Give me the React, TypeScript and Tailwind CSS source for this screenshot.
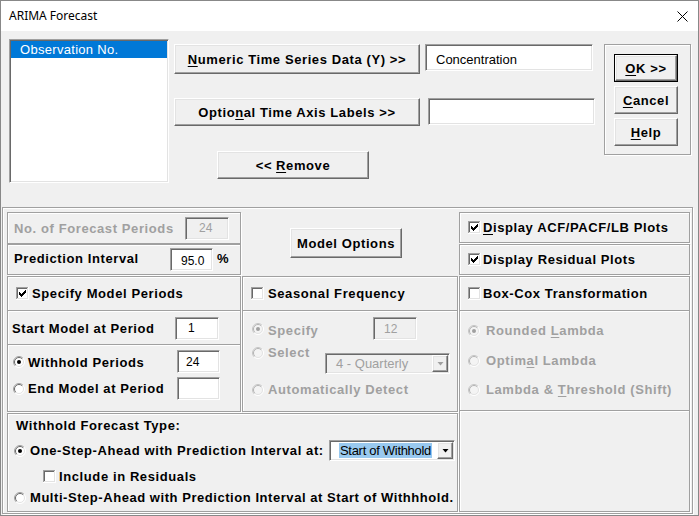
import React from "react";

const etched = "border border-[#a0a0a0] shadow-[inset_1px_1px_0_#fff,1px_1px_0_#fff]";
const sunken =
  "border border-t-[#a0a0a0] border-l-[#a0a0a0] border-r-white border-b-white shadow-[inset_1px_1px_0_#696969,inset_-1px_-1px_0_#e3e3e3]";
const raised =
  "border border-t-white border-l-white border-r-[#696969] border-b-[#696969] shadow-[inset_-1px_-1px_0_#a0a0a0,inset_1px_1px_0_#e3e3e3] bg-[#f0f0f0]";
const lbl = "font-bold text-[13px] whitespace-nowrap leading-[15px] tracking-[0.6px]";

function U({ children }: { children: React.ReactNode }) {
  return <span className="underline underline-offset-[2px] decoration-1">{children}</span>;
}

function Divider() {
  return <div className="h-[2px] shrink-0 border-t border-t-[#a0a0a0] border-b border-b-white" />;
}

function Check({ checked = false }: { checked?: boolean }) {
  const ys = [5, 6, 7, 6, 5, 4, 3];
  return (
    <svg width="13" height="13" viewBox="0 0 13 13" className="shrink-0 block">
      <rect x="0" y="0" width="13" height="13" fill="#fff" />
      <rect x="0" y="0" width="12" height="1" fill="#a0a0a0" />
      <rect x="0" y="0" width="1" height="12" fill="#a0a0a0" />
      <rect x="1" y="1" width="10" height="1" fill="#696969" />
      <rect x="1" y="1" width="1" height="10" fill="#696969" />
      <rect x="11" y="1" width="1" height="11" fill="#e3e3e3" />
      <rect x="1" y="11" width="11" height="1" fill="#e3e3e3" />
      <rect x="2" y="2" width="9" height="9" fill="#fff" />
      {checked &&
        ys.map((y, i) => <rect key={i} x={3 + i} y={y} width="1" height="3" fill="#000" />)}
    </svg>
  );
}

function Radio({ checked = false, disabled = false }: { checked?: boolean; disabled?: boolean }) {
  return (
    <svg width="12" height="12" viewBox="0 0 12 12" className="shrink-0 block">
      <circle cx="6" cy="6" r="5.5" fill={disabled ? "#f4f4f4" : "#fff"} stroke="#fff" />
      <path d="M2.1 9.9A5.5 5.5 0 0 1 9.9 2.1" fill="none" stroke={disabled ? "#c4c4c4" : "#a0a0a0"} />
      <path d="M2.8 9.2A4.5 4.5 0 0 1 9.2 2.8" fill="none" stroke={disabled ? "#b4b4b4" : "#696969"} />
      <path d="M2.8 9.2A4.5 4.5 0 0 0 9.2 2.8" fill="none" stroke="#e3e3e3" />
      {checked && <circle cx="6" cy="6" r="2" fill={disabled ? "#a0a0a0" : "#000"} />}
    </svg>
  );
}

function Btn({ className = "", children }: { className?: string; children: React.ReactNode }) {
  return (
    <div className={`flex items-center justify-center ${raised} ${lbl} ${className}`}>{children}</div>
  );
}

function Input({
  className = "",
  value = "",
  disabled = false,
  pad = "pl-[10px]",
}: {
  className?: string;
  value?: string;
  disabled?: boolean;
  pad?: string;
}) {
  return (
    <div
      className={`${sunken} ${disabled ? "bg-[#f0f0f0] text-[#a0a0a0]" : "bg-white text-black"} flex items-center text-[12px] shrink-0 ${pad} ${className}`}
    >
      {value}
    </div>
  );
}

function Arrow({ disabled = false }: { disabled?: boolean }) {
  return (
    <div className={`w-[16px] h-full flex items-center justify-center ${raised}`}>
      <svg width="7" height="4" viewBox="0 0 7 4" className="block">
        <path d="M0.5 0H6.5L3.5 3.5Z" fill={disabled ? "#a0a0a0" : "#000"} />
      </svg>
    </div>
  );
}

export default function App() {
  return (
    <div className="w-[699px] h-[516px] overflow-hidden border border-[#888] bg-[#f0f0f0] flex flex-col font-['Liberation_Sans',Arial,sans-serif] text-black">
      {/* title bar */}
      <div className="h-[30px] shrink-0 bg-white flex items-center justify-between pl-[8px] pr-[10px]">
        <span className="font-['Noto_Sans',sans-serif] text-[12px]">ARIMA Forecast</span>
        <svg width="11" height="11" viewBox="0 0 11 11" className="block">
          <path d="M0.5 0.5L10.5 10.5M10.5 0.5L0.5 10.5" stroke="#000" strokeWidth="1" />
        </svg>
      </div>

      {/* top section */}
      <div className="h-[176px] shrink-0 flex items-start">
        <div className={`ml-[8px] mt-[8px] w-[160px] h-[144px] bg-white ${sunken} pt-[1px] pl-[1px] pr-[1px]`}>
          <div className="h-[17px] bg-[#0078d7] text-white text-[13px] tracking-[0.3px] pl-[9px] flex items-center">
            Observation No.
          </div>
        </div>

        <div className="ml-[5px] w-[422px] flex flex-col">
          <div className="mt-[13px] flex items-start">
            <Btn className="w-[246px] h-[30px]">
              <U>N</U>umeric Time Series Data (Y) &gt;&gt;
            </Btn>
            <Input className="ml-[5px] w-[168px] h-[27px] items-start pt-[5px] text-[13px]" value="Concentration" pad="pl-[10px]" />
          </div>
          <div className="mt-[24px] flex items-start">
            <Btn className="w-[246px] h-[28px]">
              Optio<U>n</U>al Time Axis Labels &gt;&gt;
            </Btn>
            <Input className="ml-[8px] w-[167px] h-[27px]" />
          </div>
          <div className="mt-[25px] ml-[43px]">
            <Btn className="w-[152px] h-[28px]">
              &lt;&lt; <span className="ml-[4px]"><U>R</U>emove</span>
            </Btn>
          </div>
        </div>

        <div className={`ml-[8px] mt-[13px] w-[87px] h-[111px] ${etched} pl-[9px] pt-[9px] flex flex-col`}>
          <div className="w-[64px] h-[28px] border border-black">
            <Btn className="w-full h-full">
              <U>O</U>K &gt;&gt;
            </Btn>
          </div>
          <Btn className="mt-[4px] w-[64px] h-[28px]">
            <U>C</U>ancel
          </Btn>
          <Btn className="mt-[4px] w-[64px] h-[28px]">
            <U>H</U>elp
          </Btn>
        </div>
      </div>

      {/* bottom frame */}
      <div className={`ml-[1px] w-[691px] h-[307px] shrink-0 ${etched} pl-[4px] pt-[4px] flex gap-[1px]`}>
        {/* left + mid */}
        <div className="w-[451px] flex flex-col gap-[1px]">
          <div className="h-[200px] flex gap-[1px]">
            {/* left col */}
            <div className="w-[234px] flex flex-col">
              <div className={`h-[32px] ${etched} flex items-center pl-[6px]`}>
                <div className={`w-[171px] ${lbl} text-[#a0a0a0]`}>No. of Forecast Periods</div>
                <Input className="w-[44px] h-[23px]" value="24" disabled pad="pl-[13px]" />
              </div>
              <div className={`h-[31px] ${etched} flex items-center pl-[6px]`}>
                <div className={`w-[156px] ${lbl} -mt-[2px]`}>Prediction Interval</div>
                <Input className="w-[43px] h-[23px] pt-[3px]" value="95.0" pad="pl-[10px]" />
                <span className={`ml-[4px] ${lbl} -mt-[3px]`}>%</span>
              </div>
              <div className={`mt-[1px] h-[136px] ${etched} flex flex-col`}>
                <div className="h-[33px] shrink-0 flex items-center pl-[8px]">
                  <Check checked />
                  <span className={`ml-[3px] ${lbl}`}>Specify Model Periods</span>
                </div>
                <Divider />
                <div className="h-[32px] shrink-0 flex items-center pl-[4px]">
                  <div className={`w-[163px] ${lbl}`}>Start Model at Period</div>
                  <Input className="w-[44px] h-[23px]" value="1" pad="pl-[12px]" />
                </div>
                <Divider />
                <div className="pt-[4px] pl-[5px] flex flex-col">
                  <div className="h-[23px] flex items-center">
                    <Radio checked />
                    <div className={`ml-[3px] w-[149px] ${lbl} mt-[2px]`}>Withhold Periods</div>
                    <Input className="w-[43px] h-[23px] items-start pt-[2px]" value="24" pad="pl-[8px]" />
                  </div>
                  <div className="mt-[4px] h-[23px] flex items-center">
                    <Radio />
                    <div className={`ml-[3px] w-[149px] ${lbl}`}>End Model at Period</div>
                    <Input className="w-[43px] h-[23px]" />
                  </div>
                </div>
              </div>
            </div>

            {/* mid col */}
            <div className="w-[216px] flex flex-col">
              <div className="h-[64px] pl-[48px] pt-[16px]">
                <Btn className="w-[112px] h-[30px]">Model Options</Btn>
              </div>
              <div className={`h-[136px] ${etched} flex flex-col`}>
                <div className="h-[33px] shrink-0 flex items-center pl-[8px]">
                  <Check />
                  <span className={`ml-[4px] ${lbl}`}>Seasonal Frequency</span>
                </div>
                <Divider />
                <div className="pt-[5px] pl-[9px] flex flex-col text-[#a0a0a0]">
                  <div className="h-[23px] flex items-center">
                    <Radio checked disabled />
                    <div className={`ml-[4px] w-[105px] ${lbl} mt-[3px]`}>Specify</div>
                    <Input className="w-[44px] h-[23px]" value="12" disabled pad="pl-[10px]" />
                  </div>
                  <div className="mt-[5px] h-[28px] flex items-start">
                    <div className="h-[15px] flex items-center">
                      <Radio disabled />
                      <div className={`ml-[4px] w-[57px] ${lbl}`}>Select</div>
                    </div>
                    <div className={`mt-[8px] w-[125px] h-[21px] ${sunken} bg-[#f0f0f0] flex items-center justify-between pl-[10px] pr-[1px] py-[1px]`}>
                      <span className="text-[13px] text-[#a0a0a0]">4 - Quarterly</span>
                      <Arrow disabled />
                    </div>
                  </div>
                  <div className="mt-[9px] h-[15px] flex items-center">
                    <Radio disabled />
                    <div className={`ml-[4px] ${lbl}`}>Automatically Detect</div>
                  </div>
                </div>
              </div>
            </div>
          </div>

          {/* withhold forecast type */}
          <div className={`h-[99px] ${etched} flex flex-col pl-[6px] pt-[4px]`}>
            <div className={`h-[15px] pl-[2px] flex items-center ${lbl}`}>Withhold Forecast Type:</div>
            <div className="mt-[7px] h-[21px] flex items-center">
              <Radio checked />
              <div className={`ml-[4px] w-[299px] ${lbl}`}>One-Step-Ahead with Prediction Interval at:</div>
              <div className={`w-[126px] h-[21px] ${sunken} bg-white flex items-center justify-between pl-[9px] pr-[1px] py-[1px]`}>
                <span className="text-[13px] bg-[#99c9ef] px-[1px] leading-[15px] tracking-[-0.3px]">Start of Withhold</span>
                <Arrow />
              </div>
            </div>
            <div className="mt-[8px] h-[15px] flex items-center pl-[29px]">
              <Check />
              <span className={`ml-[3px] ${lbl}`}>Include in Residuals</span>
            </div>
            <div className="mt-[6px] h-[15px] flex items-center">
              <Radio />
              <div className={`ml-[4px] ${lbl} tracking-[0.55px]`}>Multi-Step-Ahead with Prediction Interval at Start of Withhhold.</div>
            </div>
          </div>
        </div>

        {/* right col */}
        <div className="w-[231px] flex flex-col">
          <div className={`h-[31px] ${etched} flex items-center pl-[8px]`}>
            <Check checked />
            <span className={`ml-[2px] ${lbl}`}>
              <U>D</U>isplay ACF/PACF/LB Plots
            </span>
          </div>
          <div className={`mt-[1px] h-[31px] ${etched} flex items-center pl-[8px]`}>
            <Check checked />
            <span className={`ml-[2px] ${lbl}`}>Display Residual Plots</span>
          </div>
          <div className={`mt-[1px] h-[236px] ${etched} flex flex-col`}>
            <div className="h-[33px] shrink-0 flex items-center pl-[8px]">
              <Check />
              <span className={`ml-[2px] ${lbl}`}>Box-Cox Transformation</span>
            </div>
            <Divider />
            <div className="pt-[11px] pl-[8px] flex flex-col text-[#a0a0a0]">
              <div className="h-[15px] flex items-center">
                <Radio checked disabled />
                <span className={`ml-[6px] ${lbl}`}>
                  Rounded <U>L</U>ambda
                </span>
              </div>
              <div className="mt-[15px] h-[15px] flex items-center">
                <Radio disabled />
                <span className={`ml-[6px] ${lbl}`}>
                  Optim<U>a</U>l Lambda
                </span>
              </div>
              <div className="mt-[14px] h-[15px] flex items-center">
                <Radio disabled />
                <span className={`ml-[6px] ${lbl}`}>
                  Lambda &amp; <U>T</U>hreshold (Shift)
                </span>
              </div>
            </div>
            <div className="mt-[13px]">
              <Divider />
            </div>
          </div>
        </div>
      </div>
    </div>
  );
}
